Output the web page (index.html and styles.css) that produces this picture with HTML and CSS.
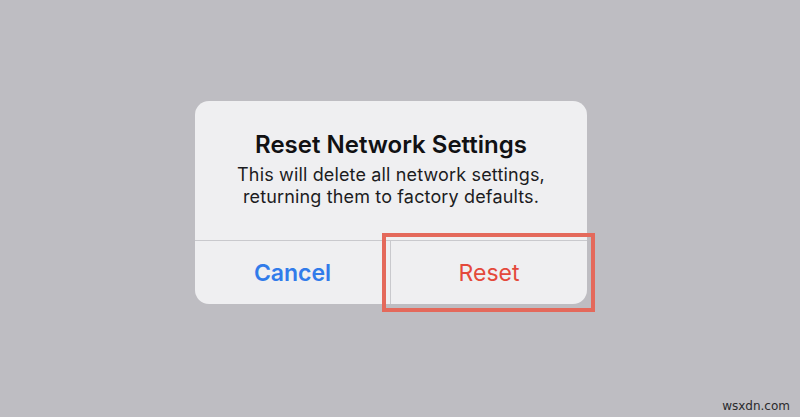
FILE: index.html
```html
<!DOCTYPE html>
<html lang="en">
<head>
  <meta charset="UTF-8">
  <title>Reset Network Settings</title>
  <meta name="viewport" content="width=device-width, initial-scale=1.0">
  <link rel="stylesheet" href="styles.css">
</head>
<body>

<div class="alert">
  <div class="alert-text">
    <h2>Reset Network Settings</h2>
    <p>This will delete all network settings,<br>returning them to factory defaults.</p>
  </div>
  <div class="alert-actions">
    <button class="cancel">Cancel</button>
    <button class="reset">Reset</button>
  </div>
</div>

<div class="watermark">wsxdn.com</div>

</body>
</html>
```

FILE: styles.css
```css
body {
  margin: 0;
  padding: 101px 0 0 195px;
  height: 417px;
  box-sizing: border-box;
  background: #bebdc2;
  font-family: 'Inter', 'Liberation Sans', sans-serif;
  color: #1c1c1e;
  position: relative;
}

.alert {
  width: 392px;
  background: #efeff1;
  border-radius: 14px;
}

.alert-text {
  height: 139px;
  box-sizing: border-box;
  padding-top: 30px;
  text-align: center;
}

.alert-text h2 {
  margin: 0;
  font-size: 24px;
  font-weight: 600;
  line-height: 28px;
  color: #111113;
}

.alert-text p {
  margin: 5px 0 0;
  font-size: 18px;
  letter-spacing: 0.15px;
  line-height: 22px;
}

.alert-actions {
  display: grid;
  grid-template-columns: 1fr 1fr;
  border-top: 1px solid #c9c9cd;
  height: 63px;
}

.alert-actions button {
  font-family: inherit;
  font-size: 23px;
  background: none;
  border: none;
  padding: 0;
  margin: 0;
}

.cancel {
  color: #317bea;
  font-weight: 600;
  border-right: 1px solid #c9c9cd !important;
}

.reset {
  color: #e4493b;
  position: relative;
}

/* highlight box drawn round the Reset button */
.reset::after {
  content: '';
  position: absolute;
  top: -8px;
  left: -9px;
  right: -8px;
  bottom: -8px;
  border: 4px solid #e4695b;
}

.watermark {
  position: absolute;
  right: 10px;
  bottom: 4px;
  font-family: 'DejaVu Sans', sans-serif;
  font-size: 12px;
  color: #2a2a2c;
}
```
